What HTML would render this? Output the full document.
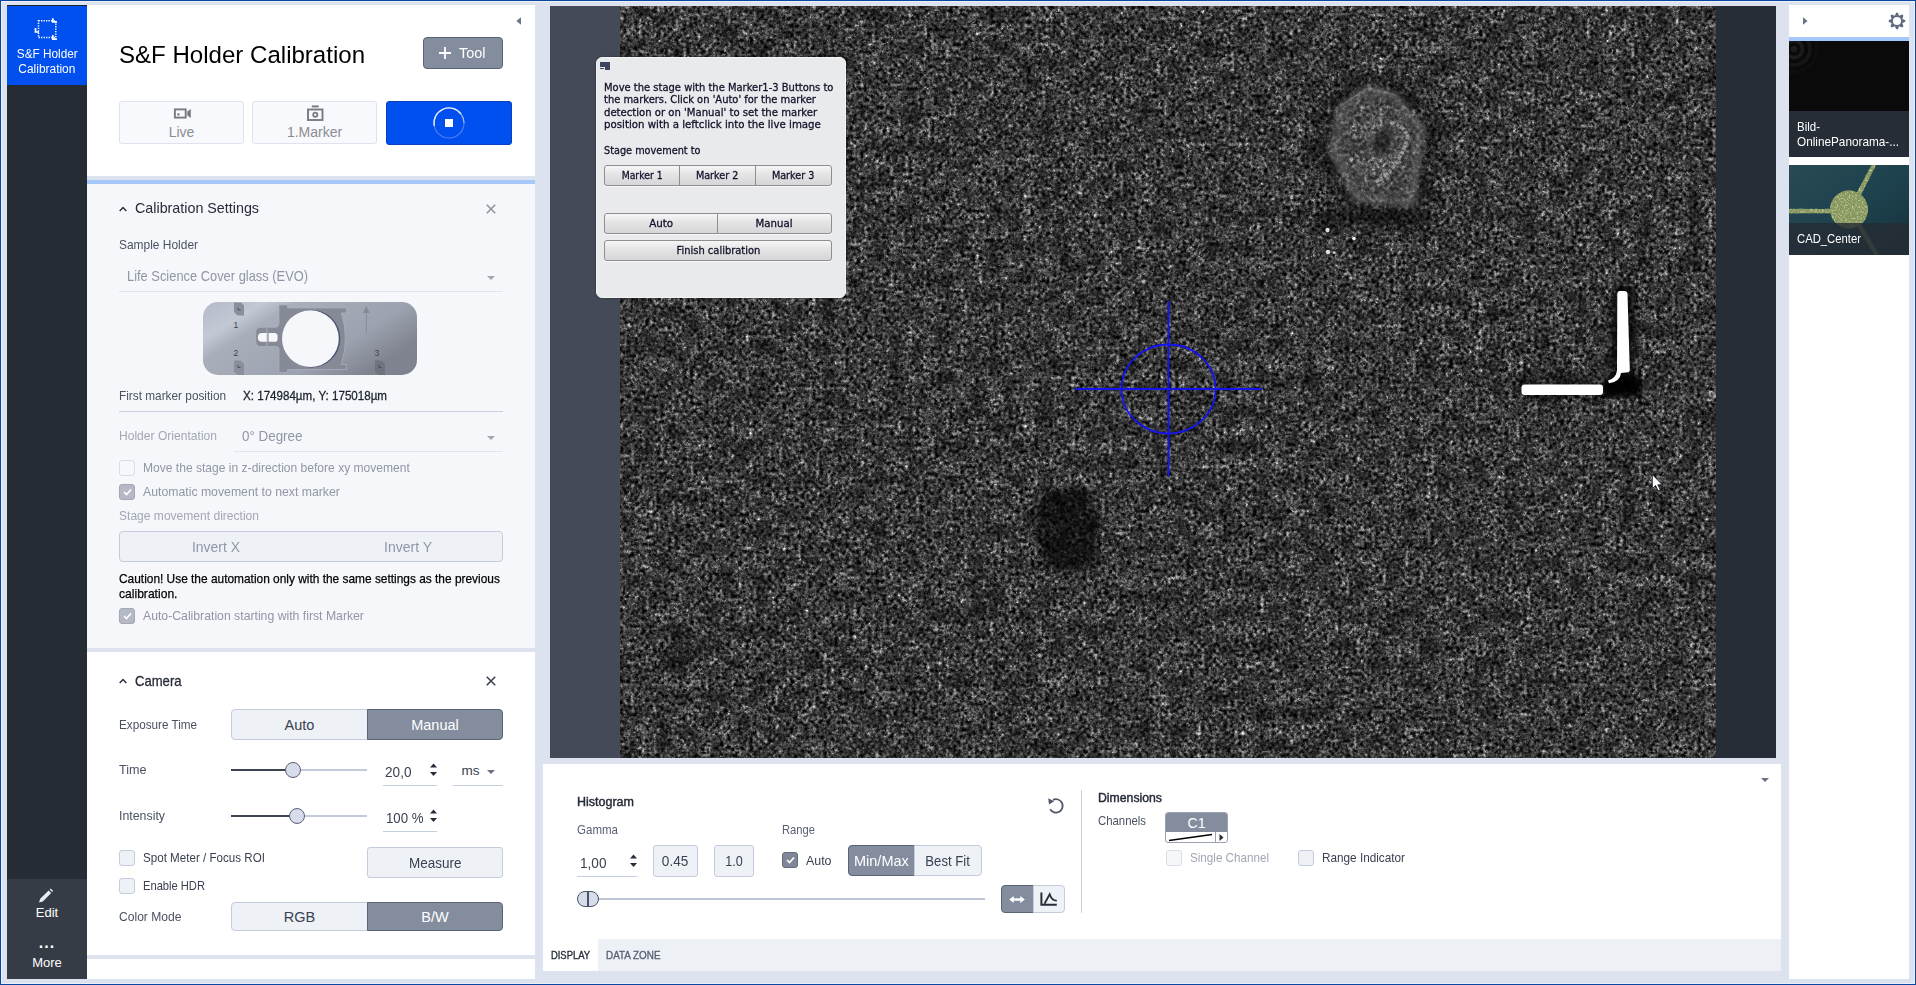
<!DOCTYPE html>
<html><head><meta charset="utf-8"><title>S&amp;F Holder Calibration</title>
<style>
*{box-sizing:border-box;margin:0;padding:0}
html,body{width:1916px;height:985px;overflow:hidden}
body{background:#dde3ee;font-family:"Liberation Sans",sans-serif;font-size:13px;color:#2a3140;position:relative}
.abs{position:absolute}
svg{position:absolute;overflow:visible}
#frame{position:absolute;left:0;top:0;width:1916px;height:985px;border:1px solid #0848a2;pointer-events:none;z-index:50}
#frame2{position:absolute;left:1px;top:1px;width:1914px;height:983px;border:1px solid #eceff5;pointer-events:none;z-index:49}
.t{position:absolute;white-space:nowrap;line-height:1}
/* sidebar */
#side{left:7px;top:5px;width:80px;height:974px;background:#262c34}
#side .act{left:0;top:0;width:80px;height:80px;background:#0050f0;border-top:1px solid #1b2330;color:#fff}
#side .bot{left:0;top:874px;width:80px;height:100px;background:#353c45;color:#fff}
.ctr{position:absolute;left:0;width:100%;text-align:center;white-space:nowrap;line-height:1}
/* left panel */
#lp{left:87px;top:5px;width:448px;height:974px;background:#fff;overflow:hidden}
.btn{position:absolute;border:1px solid #bcc6dc;background:#eef2f7;border-radius:3px}
.btn.dk{background:#838d9e;border-color:#5a6378;color:#fff}
.btn .ctr{top:50%;transform:translateY(-50%)}
.cb{position:absolute;width:16px;height:16px;border:1px solid #c3cbdc;background:#eef2f7;border-radius:3px}
.cb.dis{border-color:#d8dde8;background:#f5f7fb}
.cb.on{background:#b5b9c6;border-color:#a3a8b6}
.cb.on2{background:#7f8798;border-color:#626a7b}
.ul{position:absolute;height:1px;background:#c5cde0}
.g{color:#9096a5}
.lbl{color:#4a5262}
.qb{position:absolute;border:1px solid #8e8e90;background:linear-gradient(#f6f6f6,#e4e4e5 45%,#d6d6d8);text-align:center;font-size:10.500px;line-height:19px;white-space:nowrap;box-shadow:0 1px 0 #f8f8f8}
.qb span,.ctr span{display:inline-block}
</style></head><body>
<div id="frame"></div><div id="frame2"></div>
<!-- SIDEBAR -->
<div id="side" class="abs">
 <div class="act abs">
  <svg style="left:0;top:0" width="80" height="80" viewBox="0 0 80 80" fill="none" stroke="#fff">
   <path d="M31.500 14.800H48.800V31.600H31.500Z" stroke-width="1.500" stroke-dasharray="1.300 1.200"></path>
   <path d="M45.800 12.300V15.800H49.900M28.500 21.900V26H32M45.800 29V33.100H49.900" stroke-width="1.700"></path>
  </svg>
  <div class="ctr" style="top:42px;font-size:12.500px"><span style="transform: scaleX(0.944); transform-origin: 50% 50%;">S&amp;F Holder</span></div>
  <div class="ctr" style="top:57px;font-size:12.500px"><span style="transform: scaleX(0.954); transform-origin: 50% 50%;">Calibration</span></div>
 </div>
 <div class="bot abs">
  <svg style="left:30px;top:8px" width="18" height="18" viewBox="0 0 18 18"><path d="M2 15.5L3.2 11.8L11.6 3.4L14.2 6L5.8 14.4Z M12.6 2.4L13.6 1.4L16.2 4L15.2 5Z" fill="#e8ebf0"></path></svg>
  <div class="ctr" style="top:27px;font-size:13px">Edit</div>
  <div class="ctr" style="top:56px;font-size:16px;letter-spacing:1px;font-weight:bold">...</div>
  <div class="ctr" style="top:77px;font-size:13px">More</div>
 </div>
</div>
<!-- LEFT PANEL -->
<div id="lp" class="abs">
 <!-- header -->
 <svg style="left:429px;top:12px" width="6" height="8" viewBox="0 0 6 8"><path d="M5 0.300V7.700L0.400 4Z" fill="#67738a"></path></svg>
 <div class="t" style="left: 32px; top: 38px; font-size: 24.5px; color: rgb(0, 0, 0); transform: scaleX(0.982); transform-origin: 0px 50%;">S&amp;F Holder Calibration</div>
 <div class="btn dk" style="left:336px;top:32px;width:80px;height:32px;border-radius:4px">
   <svg style="left:15px;top:9px" width="12" height="12" viewBox="0 0 12 12"><path d="M6 0V12M0 6H12" stroke="#fff" stroke-width="1.800"></path></svg>
   <div class="t" style="left: 35px; top: 7.8px; font-size: 14.5px; color: rgb(255, 255, 255); transform: scaleX(0.996); transform-origin: 0px 50%;">Tool</div>
 </div>
 <div class="btn" style="left:32px;top:96px;width:125px;height:43px;background:#f7f9fc;border-color:#dde3ee">
   <svg style="left:54px;top:6px" width="18" height="12" viewBox="0 0 18 12" fill="none" stroke="#777a80"><rect x="0.900" y="1.400" width="10.800" height="8.200" stroke-width="1.900"></rect><path d="M13.300 3.500L16.800 1V10L13.300 7.500Z" fill="#777a80" stroke="none"></path><path d="M3.200 6.400H5.600" stroke-width="2"></path></svg>
   <div class="ctr" style="top:23.300px;transform:none;font-size:14px;color:#8b8c92">Live</div>
 </div>
 <div class="btn" style="left:165px;top:96px;width:125px;height:43px;background:#f7f9fc;border-color:#dde3ee">
   <svg style="left:54px;top:2.500px" width="17" height="16" viewBox="0 0 17 16" fill="none" stroke="#777a80"><rect x="1" y="4.500" width="14.500" height="10.500" stroke-width="1.900"></rect><path d="M4.800 1.400H11.700" stroke-width="2"></path><circle cx="8.300" cy="9.700" r="2.100" stroke-width="1.800"></circle></svg>
   <div class="ctr" style="top:23.300px;transform:none;font-size:14px;color:#8b8c92">1.Marker</div>
 </div>
 <div class="abs" style="left:299px;top:96px;width:126px;height:44px;background:#0050f0;border:1px solid #0a3fc0;border-radius:3px">
   <svg style="left:46px;top:5px" width="32" height="32" viewBox="0 0 32 32"><circle cx="16" cy="16" r="15" fill="none" stroke="#4f7ef6" stroke-width="1.200"></circle><path d="M1.300 19A15 15 0 0 1 28 7" fill="none" stroke="#e8eeff" stroke-width="1.300"></path><path d="M28 7A15 15 0 0 1 31 16" fill="none" stroke="#9db8fa" stroke-width="1.200"></path><rect x="12" y="12" width="8" height="8" fill="#fff"></rect></svg>
 </div>
 <div class="abs" style="left:0;top:171px;width:448px;height:4px;background:#dde3ee"></div>
 <div class="abs" style="left:0;top:175px;width:448px;height:4px;background:#a5c8fb"></div>
 <!-- calibration section -->
 <div class="abs" style="left:0;top:179px;width:448px;height:464px;background:#f5f7fb"></div>
 <div class="abs" style="left:0;top:643px;width:448px;height:4px;background:#dde3ee"></div>
 <svg style="left:32px;top:201px" width="8" height="6" viewBox="0 0 8 6"><path d="M0.7 5L4 1.5L7.3 5" fill="none" stroke="#2a3140" stroke-width="1.5"></path></svg>
 <div class="t" style="left: 48px; top: 196px; font-size: 14.5px; color: rgb(38, 44, 56); transform: scaleX(0.986); transform-origin: 0px 50%;">Calibration Settings</div>
 <svg style="left:399px;top:199px" width="10" height="10" viewBox="0 0 10 10"><path d="M0.8 0.8L9.2 9.2M9.2 0.8L0.8 9.2" stroke="#8a909e" stroke-width="1.5"></path></svg>
 <div class="t lbl" style="left: 32px; top: 233px; font-size: 13px; transform: scaleX(0.919); transform-origin: 0px 50%;">Sample Holder</div>
 <div class="t g" style="left: 40px; top: 264px; font-size: 14.5px; transform: scaleX(0.888); transform-origin: 0px 50%;">Life Science Cover glass (EVO)</div>
 <svg style="left:400px;top:271px" width="8" height="4" viewBox="0 0 8 4"><path d="M0 0H8L4 4Z" fill="#a0a6b4"></path></svg>
 <div class="ul" style="left:32px;top:286px;width:384px;background:#dfe4ee"></div>
 <!-- holder graphic -->
 <svg style="left:116px;top:297px" width="214" height="73" viewBox="0 0 214 73">
  <defs>
   <linearGradient id="hg" x1="0" y1="0" x2="1" y2="0.55">
    <stop offset="0" stop-color="#b4bac8"></stop><stop offset="0.22" stop-color="#c2c8d4"></stop><stop offset="0.34" stop-color="#a9aebb"></stop><stop offset="0.75" stop-color="#9da2b0"></stop><stop offset="1" stop-color="#7f838f"></stop>
   </linearGradient>
   <clipPath id="hc"><rect x="0" y="0" width="214" height="73" rx="15" ry="15"></rect></clipPath>
  </defs>
  <rect x="0" y="0" width="214" height="73" rx="15" ry="15" fill="url(#hg)"></rect>
  <g clip-path="url(#hc)">
   <path d="M31 0.5H38L41 3.5V13.5H34.5L31 10Z" fill="#8b8f9c"></path>
   <path d="M31 58.5H37.5L41 62V73H34.5L31 69.5Z" fill="#8b8f9c"></path>
   <path d="M172 58.5H178.5L182 62V73H175.5L172 69.5Z" fill="#6f737e"></path>
   <path d="M35 5.5V8H37.5M35 63V65.5H37.5M176 63V65.5H178.500" stroke="#3c4050" stroke-width="0.8" fill="none"></path>
  </g>
  <!-- frame -->
  <path d="M76 3H84.500V6H143.500V11H138.300A85 85 0 0 1 138.300 62.500H143.500V67.500H84.500V70.500H76V46.500Q76 44.500 72 44.500H58Q52.800 44.500 52.800 39.500V30Q52.800 25.300 58 25.300H72Q76 25.300 76 21Z" fill="#868a97" stroke="#aeb3c0" stroke-width="0.700"></path>
  <circle cx="108.500" cy="36.700" r="28.800" fill="#4a5070"></circle>
  <circle cx="107.400" cy="36.700" r="28.400" fill="#f5f7fb"></circle>
  <path d="M59 31H71.500Q74.500 31 74.500 33.500V37.500Q74.500 39.800 71.500 39.800H59Q54.800 39.800 54.800 35.400Q54.800 31 59 31Z" fill="#f5f7fb"></path>
  <rect x="64.300" y="25.500" width="1.300" height="19" fill="#868a97"></rect>
  <rect x="63.600" y="25.500" width="0.700" height="19" fill="#b7bcc8"></rect>
  <!-- arrow -->
  <path d="M163.300 4L166.500 11H160.100Z" fill="#868a97"></path>
  <path d="M163.300 10V30.500" stroke="#868a97" stroke-width="1"></path>
  <text x="30.500" y="25.800" font-family="Liberation Sans, sans-serif" font-size="8.500" fill="#3c4050">1</text>
  <text x="30.500" y="53.500" font-family="Liberation Sans, sans-serif" font-size="8.500" fill="#3c4050">2</text>
  <text x="171.500" y="53.500" font-family="Liberation Sans, sans-serif" font-size="8.500" fill="#3c4050">3</text>
 </svg>
 <div class="t lbl" style="left: 32px; top: 384px; font-size: 13px; transform: scaleX(0.909); transform-origin: 0px 50%;">First marker position</div>
 <div class="t" style="left: 156px; top: 384px; font-size: 13px; color: rgb(28, 34, 46); -webkit-text-stroke: 0.3px rgb(28, 34, 46); transform: scaleX(0.892); transform-origin: 0px 50%;">X: 174984µm, Y: 175018µm</div>
 <div class="ul" style="left:32px;top:406px;width:384px;background:#c9d0df"></div>
 <div class="t g" style="left: 32px; top: 424px; font-size: 13px; color: rgb(162, 167, 180); transform: scaleX(0.929); transform-origin: 0px 50%;">Holder Orientation</div>
 <div class="t g" style="left: 155px; top: 424px; font-size: 14.5px; transform: scaleX(0.924); transform-origin: 0px 50%;">0° Degree</div>
 <svg style="left:400px;top:431px" width="8" height="4" viewBox="0 0 8 4"><path d="M0 0H8L4 4Z" fill="#a0a6b4"></path></svg>
 <div class="ul" style="left:147px;top:446px;width:269px;background:#dfe4ee"></div>
 <div class="cb dis" style="left:32px;top:455px"></div>
 <div class="t g" style="left: 56px; top: 456px; font-size: 13px; transform: scaleX(0.928); transform-origin: 0px 50%;">Move the stage in z-direction before xy movement</div>
 <div class="cb on" style="left:32px;top:479px"><svg style="left:3px;top:3px" width="9" height="8" viewBox="0 0 9 8"><path d="M1 4L3.500 6.500L8 1.500" fill="none" stroke="#fff" stroke-width="1.700"></path></svg></div>
 <div class="t g" style="left: 56px; top: 480px; font-size: 13px; transform: scaleX(0.943); transform-origin: 0px 50%;">Automatic movement to next marker</div>
 <div class="t g" style="left: 32px; top: 504px; font-size: 13px; color: rgb(162, 167, 180); transform: scaleX(0.927); transform-origin: 0px 50%;">Stage movement direction</div>
 <div class="btn" style="left:32px;top:526px;width:384px;height:31px;border-radius:4px;border-color:#c3cbdc">
   <div class="t g" style="left: 71.5px; top: 8px; font-size: 14.5px; transform: scaleX(0.961); transform-origin: 0px 50%;">Invert X</div>
   <div class="t g" style="left: 263.5px; top: 8px; font-size: 14.5px; transform: scaleX(0.966); transform-origin: 0px 50%;">Invert Y</div>
 </div>
 <div class="t" style="left: 32px; top: 567px; font-size: 13px; color: rgb(0, 0, 0); -webkit-text-stroke: 0.25px rgb(0, 0, 0); transform: scaleX(0.915); transform-origin: 0px 50%;">Caution! Use the automation only with the same settings as the previous</div>
 <div class="t" style="left: 32px; top: 582px; font-size: 13px; color: rgb(0, 0, 0); -webkit-text-stroke: 0.25px rgb(0, 0, 0); transform: scaleX(0.93); transform-origin: 0px 50%;">calibration.</div>
 <div class="cb on" style="left:32px;top:603px"><svg style="left:3px;top:3px" width="9" height="8" viewBox="0 0 9 8"><path d="M1 4L3.500 6.500L8 1.500" fill="none" stroke="#fff" stroke-width="1.700"></path></svg></div>
 <div class="t g" style="left: 56px; top: 604px; font-size: 13px; transform: scaleX(0.941); transform-origin: 0px 50%;">Auto-Calibration starting with first Marker</div>
 <!-- camera section -->
 <svg style="left:32px;top:673px" width="8" height="6" viewBox="0 0 8 6"><path d="M0.700 5L4 1.500L7.300 5" fill="none" stroke="#2a3140" stroke-width="1.500"></path></svg>
 <div class="t" style="left: 48px; top: 669px; font-size: 14.5px; color: rgb(38, 44, 56); -webkit-text-stroke: 0.3px rgb(38, 44, 56); transform: scaleX(0.902); transform-origin: 0px 50%;">Camera</div>
 <svg style="left:399px;top:671px" width="10" height="10" viewBox="0 0 10 10"><path d="M0.800 0.800L9.200 9.200M9.200 0.800L0.800 9.200" stroke="#3a4150" stroke-width="1.600"></path></svg>
 <div class="t lbl" style="left: 32px; top: 713px; font-size: 13px; transform: scaleX(0.9); transform-origin: 0px 50%;">Exposure Time</div>
 <div class="btn" style="left:144px;top:704px;width:137px;height:31px;border-radius:4px 0 0 4px;border-color:#c3cbdc"><div class="ctr" style="font-size:14.500px;color:#3a4150">Auto</div></div>
 <div class="btn dk" style="left:280px;top:704px;width:136px;height:31px;border-radius:0 4px 4px 0"><div class="ctr" style="font-size:14.500px">Manual</div></div>
 <div class="t lbl" style="left: 32px; top: 758px; font-size: 13px; transform: scaleX(0.968); transform-origin: 0px 50%;">Time</div>
 <div class="abs" style="left:144px;top:764px;width:136px;height:2px;background:#c3cbdb"></div>
 <div class="abs" style="left:144px;top:764px;width:56px;height:2px;background:#3d4554"></div>
 <div class="abs" style="left:198px;top:757px;width:16px;height:16px;border-radius:8px;background:#d6dcea;border:1.500px solid #596173"></div>
 <div class="t" style="left: 298px; top: 760px; font-size: 14px; color: rgb(58, 65, 80); transform: scaleX(0.972); transform-origin: 0px 50%;">20,0</div>
 <svg style="left:343px;top:758px" width="7" height="14" viewBox="0 0 7 14"><path d="M0 4.500H7L3.500 0.500ZM0 9H7L3.500 13Z" fill="#262c38"></path></svg>
 <div class="ul" style="left:296px;top:780px;width:54px"></div>
 <div class="t" style="left:374.500px;top:758.500px;font-size:13.500px;color:#3a4150">ms</div>
 <svg style="left:400px;top:765px" width="8" height="4" viewBox="0 0 8 4"><path d="M0 0H8L4 4Z" fill="#6a7282"></path></svg>
 <div class="ul" style="left:366px;top:780px;width:50px"></div>
 <div class="t lbl" style="left: 32px; top: 804px; font-size: 13px; transform: scaleX(0.95); transform-origin: 0px 50%;">Intensity</div>
 <div class="abs" style="left:144px;top:810px;width:136px;height:2px;background:#c3cbdb"></div>
 <div class="abs" style="left:144px;top:810px;width:60px;height:2px;background:#3d4554"></div>
 <div class="abs" style="left:202px;top:803px;width:16px;height:16px;border-radius:8px;background:#d6dcea;border:1.500px solid #596173"></div>
 <div class="t" style="left: 299px; top: 806px; font-size: 14px; color: rgb(58, 65, 80); transform: scaleX(0.945); transform-origin: 0px 50%;">100 %</div>
 <svg style="left:343px;top:804px" width="7" height="14" viewBox="0 0 7 14"><path d="M0 4.500H7L3.500 0.500ZM0 9H7L3.500 13Z" fill="#262c38"></path></svg>
 <div class="ul" style="left:296px;top:826px;width:54px"></div>
 <div class="cb" style="left:32px;top:845px"></div>
 <div class="t" style="left: 56px; top: 846px; font-size: 13px; color: rgb(58, 65, 80); transform: scaleX(0.893); transform-origin: 0px 50%;">Spot Meter / Focus ROI</div>
 <div class="btn" style="left:280px;top:842px;width:136px;height:31px;border-radius:3px;border-color:#c3cbdc"><div class="ctr" style="font-size:14.500px;color:#3a4150"><span style="transform: scaleX(0.93); transform-origin: 50% 50%;">Measure</span></div></div>
 <div class="cb" style="left:32px;top:873px"></div>
 <div class="t" style="left: 56px; top: 874px; font-size: 13px; color: rgb(58, 65, 80); letter-spacing: -0.02px; transform: scaleX(0.86); transform-origin: 0px 50%;">Enable HDR</div>
 <div class="t lbl" style="left: 32px; top: 905px; font-size: 13px; transform: scaleX(0.93); transform-origin: 0px 50%;">Color Mode</div>
 <div class="btn" style="left:144px;top:897px;width:137px;height:29px;border-radius:4px 0 0 4px;border-color:#c3cbdc"><div class="ctr" style="font-size:14.500px;color:#3a4150">RGB</div></div>
 <div class="btn dk" style="left:280px;top:897px;width:136px;height:29px;border-radius:0 4px 4px 0"><div class="ctr" style="font-size:14.500px">B/W</div></div>
 <div class="abs" style="left:0;top:950px;width:448px;height:4px;background:#dde3ee"></div>
</div>
<!-- VIEWER -->
<div id="vw" class="abs" style="left:550px;top:6px;width:1226px;height:752px;background:#272d36;overflow:hidden">
 <div class="abs" style="left:0;top:0;width:70px;height:752px;background:#444a57"></div>
 <svg style="left:69.500px;top:0" width="1095.500" height="752" viewBox="0 0 1095.500 752">
  <defs>
   <filter id="nz" x="0" y="0" width="100%" height="100%" color-interpolation-filters="sRGB">
    <feTurbulence type="fractalNoise" baseFrequency="0.27" numOctaves="3" seed="7" result="t"></feTurbulence>
    <feColorMatrix in="t" type="matrix" values="0.75 0.75 0 0 -0.385  0.75 0.75 0 0 -0.385  0.75 0.75 0 0 -0.385  0 0 0 0 1" result="f0"></feColorMatrix>
    <feComponentTransfer in="f0" result="f"><feFuncR type="gamma" exponent="1.5" amplitude="1.0"></feFuncR><feFuncG type="gamma" exponent="1.5" amplitude="1.0"></feFuncG><feFuncB type="gamma" exponent="1.5" amplitude="1.0"></feFuncB></feComponentTransfer>
    <feColorMatrix in="t" type="matrix" values="0 0 6 0 -3.960  0 0 6 0 -3.960  0 0 6 0 -3.960  0 0 0 0 1" result="s"></feColorMatrix>
    <feComposite in="f" in2="s" operator="arithmetic" k1="0" k2="1" k3="0.3" k4="0" result="g"></feComposite>
    <feTurbulence type="fractalNoise" baseFrequency="0.06" numOctaves="2" seed="11" result="lt"></feTurbulence>
    <feColorMatrix in="lt" type="matrix" values="1 0 0 0 0  1 0 0 0 0  1 0 0 0 0  0 0 0 0 1" result="l"></feColorMatrix>
    <feComposite in="g" in2="l" operator="arithmetic" k1="1.3" k2="0.30" k3="0" k4="0"></feComposite><feGaussianBlur stdDeviation="0.75"></feGaussianBlur>
   </filter>
   <filter id="b6"><feGaussianBlur stdDeviation="6"></feGaussianBlur></filter>
   <filter id="b3"><feGaussianBlur stdDeviation="3"></feGaussianBlur></filter>
   <filter id="b1"><feGaussianBlur stdDeviation="0.700"></feGaussianBlur></filter>
  </defs>
  <rect width="1095.500" height="752" fill="#fff" filter="url(#nz)"></rect>
  <!-- dark / bright modulation over noise -->
  <g filter="url(#b6)">
   <path d="M747.600 79.700L776.500 87.500L805.700 121L794.500 201.400L734.200 197L708.500 143.300L718.500 98.700Z" fill="none" stroke="#000" stroke-width="26" opacity="0.420"></path>
   <rect x="690" y="207" width="112" height="17" fill="#000" opacity="0.450"></rect>
   <ellipse cx="60" cy="647" rx="20" ry="18" fill="#000" opacity="0.330"></ellipse>
   <ellipse cx="372" cy="597" rx="14" ry="9" fill="#000" opacity="0.200"></ellipse>
  </g>
  <g filter="url(#b3)">
   <path d="M430 482L462 483L479 510L478 546L456 566L428 563L415 530L418 498Z" fill="#000" opacity="0.620"></path>
   <path d="M747.600 79.700L776.500 87.500L805.700 121L794.500 201.400L734.200 197L708.500 143.300L718.500 98.700Z" fill="#fff" opacity="0.130"></path>
   <path d="M747.600 82.700L775.500 90.500L801.700 122L791.500 197.400L737.200 193L712.500 143.300L721.500 100.700Z" fill="none" stroke="#fff" stroke-width="7" opacity="0.200"></path>
   <ellipse cx="762" cy="135" rx="11" ry="18" fill="#000" opacity="0.520" transform="rotate(18 762 135)"></ellipse>
  </g>
  <g filter="url(#b1)" fill="none" stroke="#fff">
   <path d="M770 116Q784 120 788 130Q780 162 756 176" stroke-width="3.500" opacity="0.380" stroke-dasharray="5 2 3 1"></path>
   <path d="M720 100L748 82L776 89" stroke-width="2" opacity="0.150"></path>
   <g fill="#fff" stroke="none"><circle cx="707.500" cy="224" r="2.200" opacity="0.850"></circle><circle cx="734" cy="232.500" r="1.800" opacity="0.950"></circle><circle cx="708" cy="246" r="2.200" opacity="0.850"></circle><circle cx="714" cy="246.500" r="1.600" opacity="0.700"></circle><circle cx="711" cy="236" r="3" opacity="0.250"></circle></g>
  </g>
  <g filter="url(#b3)" fill="none" stroke="#000" stroke-linecap="round">
   <path d="M1003 290V370" stroke-width="26" opacity="0.700"></path>
   <path d="M905 383.500H985" stroke-width="20" opacity="0.400"></path>
   <path d="M905 372H960" stroke-width="14" opacity="0.350"></path>
   <path d="M992 381H1012" stroke-width="22" opacity="0.950"></path>
  </g>
  <g filter="url(#b1)" fill="#fff">
   <rect x="901.500" y="378.400" width="81.500" height="10.600" rx="3"></rect>
   <path d="M1000 285H1004.500Q1007.300 285 1007.500 288L1009.800 364Q1009.800 366.500 1006 366.500L1001 367Q1000 376 989 377.200L988 374.500Q996.500 372 997 364L997.300 288Q997.500 285 1000 285Z"></path>
  </g>
  <!-- crosshair -->
  <g stroke="#1414ee" stroke-width="1.800" fill="none">
   <path d="M455 383H642M548.500 295V470.500"></path>
   <ellipse cx="548.500" cy="383" rx="47" ry="44.500"></ellipse>
  </g>
  <!-- cursor -->
  <path d="M1032.300 468.500V482.500L1035.600 479.600L1038.200 484.800L1040.300 483.800L1037.800 478.800H1042.300Z" fill="#fff" stroke="#0a0a14" stroke-width="0.800"></path>
 </svg>
 <!-- dialog -->
 <div class="abs" id="dlg" style="left:46px;top:51px;width:250px;height:241px;background:#e9eaec;border:1px solid #f4f4f6;border-radius:6px;box-shadow:0 0 2px rgba(0,0,0,.5);font-family:'DejaVu Sans','Liberation Sans',sans-serif;color:#10122a;-webkit-text-stroke:0.300px #10122a">
  <div class="abs" style="left:3px;top:4px;width:10px;height:7.500px;background:#3c4460"></div>
  <div class="abs" style="left:3px;top:8.500px;width:5px;height:3px;background:#e9eaec"></div><div class="abs" style="left:3px;top:10.300px;width:4px;height:1.200px;background:#3c4460"></div>
  <div class="t" style="left: 7px; top: 24px; font-size: 10.5px; transform: scaleX(0.948); transform-origin: 0px 50%;">Move the stage with the Marker1-3 Buttons to</div>
  <div class="t" style="left: 7px; top: 36.3px; font-size: 10.5px; transform: scaleX(0.945); transform-origin: 0px 50%;">the markers. Click on 'Auto' for the marker</div>
  <div class="t" style="left: 7px; top: 48.7px; font-size: 10.5px; transform: scaleX(0.96); transform-origin: 0px 50%;">detection or on 'Manual' to set the marker</div>
  <div class="t" style="left: 7px; top: 61px; font-size: 10.5px; transform: scaleX(0.974); transform-origin: 0px 50%;">position with a leftclick into the live image</div>
  <div class="t" style="left: 7px; top: 87px; font-size: 10.5px; transform: scaleX(0.925); transform-origin: 0px 50%;">Stage movement to</div>
  <div class="qb" style="left:7px;top:106.5px;width:76px;height:21px;border-radius:3px 0 0 3px"><span style="transform: scaleX(0.885); transform-origin: 50% 50%;">Marker 1</span></div>
  <div class="qb" style="left:82px;top:106.5px;width:77px;height:21px;border-radius:0"><span style="transform: scaleX(0.918); transform-origin: 50% 50%;">Marker 2</span></div>
  <div class="qb" style="left:158px;top:106.5px;width:77px;height:21px;border-radius:0 3px 3px 0"><span style="transform: scaleX(0.918); transform-origin: 50% 50%;">Marker 3</span></div>
  <div class="qb" style="left:7px;top:154.5px;width:114px;height:21px;border-radius:3px 0 0 3px"><span style="transform: scaleX(0.984); transform-origin: 50% 50%;">Auto</span></div>
  <div class="qb" style="left:120px;top:154.5px;width:115px;height:21px;border-radius:0 3px 3px 0"><span style="transform: scaleX(0.97); transform-origin: 50% 50%;">Manual</span></div>
  <div class="qb" style="left:7px;top:181.500px;width:228px;height:21px;border-radius:3px"><span style="transform: scaleX(0.946); transform-origin: 50% 50%;">Finish calibration</span></div>
 </div>
</div>
<!-- BOTTOM PANEL -->
<div id="bp" class="abs" style="left:543px;top:764px;width:1238px;height:207px;background:#fff">
 <div class="abs" style="left:0;top:175px;width:1238px;height:32px;background:#edf1f6"></div>
 <div class="abs" style="left:0;top:175px;width:55px;height:32px;background:#fff"></div>
 <div class="t" style="left: 8px; top: 186px; font-size: 11px; color: rgb(38, 44, 56); -webkit-text-stroke: 0.35px rgb(38, 44, 56); letter-spacing: -0.05px; transform: scaleX(0.86); transform-origin: 0px 50%;">DISPLAY</div>
 <div class="t" style="left: 63px; top: 186px; font-size: 11px; color: rgb(89, 97, 115); -webkit-text-stroke: 0.35px rgb(89, 97, 115); transform: scaleX(0.898); transform-origin: 0px 50%;">DATA ZONE</div>
 <svg style="left:1218px;top:14px" width="8" height="4" viewBox="0 0 8 4"><path d="M0 0H8L4 4Z" fill="#6a7282"></path></svg>
 <div class="t" style="left: 34px; top: 31px; font-size: 13px; color: rgb(38, 44, 56); -webkit-text-stroke: 0.45px rgb(38, 44, 56); transform: scaleX(0.962); transform-origin: 0px 50%;">Histogram</div>
 <svg style="left:504px;top:33px" width="18" height="18" viewBox="0 0 18 18"><path d="M6 2.900A6.700 6.700 0 1 1 3.200 12.250" fill="none" stroke="#4f5868" stroke-width="1.800"></path><path d="M1.200 1.200L7.200 4.300L2 7.400Z" fill="#4f5868"></path></svg>
 <div class="t" style="left: 34px; top: 59.3px; font-size: 13px; color: rgb(89, 97, 115); transform: scaleX(0.887); transform-origin: 0px 50%;">Gamma</div>
 <div class="t" style="left: 239px; top: 59.3px; font-size: 13px; color: rgb(89, 97, 115); transform: scaleX(0.861); transform-origin: 0px 50%;">Range</div>
 <div class="t" style="left: 36.5px; top: 92px; font-size: 14px; color: rgb(58, 65, 80); transform: scaleX(0.972); transform-origin: 0px 50%;">1,00</div>
 <svg style="left:87px;top:90px" width="7" height="14" viewBox="0 0 7 14"><path d="M0 4.500H7L3.500 0.500ZM0 9H7L3.500 13Z" fill="#262c38"></path></svg>
 <div class="ul" style="left:34px;top:112px;width:60px"></div>
 <div class="btn" style="left:110px;top:81px;width:45px;height:32px;border-color:#c3cbdc"><div class="ctr" style="font-size:14.500px;color:#3a4150"><span style="transform: scaleX(0.939); transform-origin: 50% 50%;">0.45</span></div></div>
 <div class="btn" style="left:171px;top:81px;width:40px;height:32px;border-color:#c3cbdc"><div class="ctr" style="font-size:14.500px;color:#3a4150"><span style="transform: scaleX(0.868); transform-origin: 50% 50%;">1.0</span></div></div>
 <div class="cb on2" style="left:239px;top:88px"><svg style="left:3px;top:3px" width="9" height="8" viewBox="0 0 9 8"><path d="M1 4L3.500 6.500L8 1.500" fill="none" stroke="#fff" stroke-width="1.700"></path></svg></div>
 <div class="t" style="left: 263px; top: 90px; font-size: 13px; color: rgb(58, 65, 80); transform: scaleX(0.953); transform-origin: 0px 50%;">Auto</div>
 <div class="btn dk" style="left:305px;top:81px;width:67px;height:31px;border-radius:4px 0 0 4px"><div class="ctr" style="font-size:14.500px"><span style="transform: scaleX(0.998); transform-origin: 50% 50%;">Min/Max</span></div></div>
 <div class="btn" style="left:371px;top:81px;width:68px;height:31px;border-radius:0 4px 4px 0;border-color:#c3cbdc"><div class="ctr" style="font-size:14.500px;color:#3a4150"><span style="transform: scaleX(0.905); transform-origin: 50% 50%;">Best Fit</span></div></div>
 <div class="abs" style="left:55px;top:134px;width:387px;height:2px;background:#bcc5d6"></div>
 <div class="abs" style="left:34px;top:127px;width:22px;height:16px;border-radius:8px;background:#d6dcea;border:1.500px solid #4a5263"></div>
 <div class="abs" style="left:44.300px;top:127px;width:1.400px;height:16px;background:#4a5263"></div>
 <div class="btn dk" style="left:458px;top:121px;width:33px;height:28px;border-radius:4px 0 0 4px">
   <svg style="left:7.200px;top:9.500px" width="16" height="7" viewBox="0 0 15.600 7"><path d="M0 3.500L4.500 0V2.300H11.100V0L15.600 3.500L11.100 7V4.700H4.500V7Z" fill="#fff"></path></svg></div>
 <div class="btn" style="left:490px;top:121px;width:32px;height:28px;border-radius:0 4px 4px 0;border-color:#c3cbdc">
   <svg style="left:0;top:0" width="32" height="28" viewBox="0 0 32 28" fill="none" stroke="#262c38"><path d="M7.400 6.500V18.700H22.800" stroke-width="2"></path><path d="M10.500 17.800L15.700 8.300Q18 15 22.800 14.700" stroke-width="1.800"></path></svg></div>
 <div class="abs" style="left:538px;top:26px;width:1px;height:123px;background:#c9d0df"></div>
 <div class="t" style="left: 555px; top: 27px; font-size: 13px; color: rgb(38, 44, 56); -webkit-text-stroke: 0.45px rgb(38, 44, 56); transform: scaleX(0.942); transform-origin: 0px 50%;">Dimensions</div>
 <div class="t" style="left: 555px; top: 50px; font-size: 13px; color: rgb(74, 82, 98); transform: scaleX(0.874); transform-origin: 0px 50%;">Channels</div>
 <div class="abs" style="left:622px;top:48px;width:63px;height:31px;border:1px solid #9aa2b2;border-radius:3px;background:#fff;overflow:hidden">
   <div class="abs" style="left:0;top:0;width:63px;height:19px;background:#838d9e"></div>
   <div class="ctr" style="top:3px;font-size:14px;color:#fff">C1</div>
   <div class="abs" style="left:49px;top:19px;width:1px;height:11px;background:#9aa2b2"></div>
   <svg style="left:2px;top:20px" width="46" height="9" viewBox="0 0 46 9"><path d="M1 7.500L44 1.500" stroke="#000" stroke-width="1.300"></path></svg>
   <svg style="left:53px;top:21px" width="5" height="7" viewBox="0 0 5 7"><path d="M0.500 0L4.500 3.500L0.500 7Z" fill="#262c38"></path></svg>
 </div>
 <div class="cb dis" style="left:623px;top:86px"></div>
 <div class="t g" style="left: 647px; top: 87px; font-size: 13px; color: rgb(162, 167, 180); transform: scaleX(0.896); transform-origin: 0px 50%;">Single Channel</div>
 <div class="cb" style="left:755px;top:86px"></div>
 <div class="t" style="left: 779px; top: 87px; font-size: 13px; color: rgb(58, 65, 80); transform: scaleX(0.904); transform-origin: 0px 50%;">Range Indicator</div>
</div>
<!-- RIGHT PANEL -->
<div id="rp" class="abs" style="left:1789px;top:5px;width:120px;height:974px;background:#fff;overflow:hidden">
 <svg style="left:13px;top:12px" width="6" height="8" viewBox="0 0 6 8"><path d="M1 0.300V7.700L5.600 4Z" fill="#67738a"></path></svg>
 <svg style="left:99px;top:7px" width="18" height="18" viewBox="-9 -9 18 18"><g fill="#5c687b"><path d="M-2.200 -5.200L-0.800 -8.300H0.800L2.200 -5.200Z" transform="rotate(0)"></path><path d="M-2.200 -5.200L-0.800 -8.300H0.800L2.200 -5.200Z" transform="rotate(45)"></path><path d="M-2.200 -5.200L-0.800 -8.300H0.800L2.200 -5.200Z" transform="rotate(90)"></path><path d="M-2.200 -5.200L-0.800 -8.300H0.800L2.200 -5.200Z" transform="rotate(135)"></path><path d="M-2.200 -5.200L-0.800 -8.300H0.800L2.200 -5.200Z" transform="rotate(180)"></path><path d="M-2.200 -5.200L-0.800 -8.300H0.800L2.200 -5.200Z" transform="rotate(225)"></path><path d="M-2.200 -5.200L-0.800 -8.300H0.800L2.200 -5.200Z" transform="rotate(270)"></path><path d="M-2.200 -5.200L-0.800 -8.300H0.800L2.200 -5.200Z" transform="rotate(315)"></path><circle r="5.800"></circle></g><circle r="4.100" fill="#fff"></circle></svg>
 <div class="abs" style="left:0;top:32px;width:120px;height:4px;background:#a5c8fb"></div>
 <!-- thumb 1 -->
 <div class="abs" style="left:0;top:36px;width:120px;height:116px;background:#272d36;overflow:hidden">
  <svg style="left:0;top:0" width="120" height="70" viewBox="0 0 120 70"><rect width="120" height="70" fill="#0a0a0a"></rect><g fill="none" stroke="#1c1c1c" stroke-width="3.500" filter="url(#b1)"><circle cx="5" cy="8" r="1.500" fill="#1c1c1c"></circle><circle cx="5" cy="8" r="8.500"></circle><circle cx="5" cy="8" r="16" stroke="#151515"></circle><circle cx="5" cy="8" r="23" stroke="#111"></circle></g></svg>
  <div class="t" style="left: 8px; top: 78.5px; font-size: 13px; color: rgb(255, 255, 255); transform: scaleX(0.884); transform-origin: 0px 50%;">Bild-</div>
  <div class="t" style="left: 8px; top: 94px; font-size: 13px; color: rgb(255, 255, 255); transform: scaleX(0.905); transform-origin: 0px 50%;">OnlinePanorama-...</div>
 </div>
 <!-- thumb 2 -->
 <div class="abs" style="left:0;top:160px;width:120px;height:89.500px;overflow:hidden;background:#1e4552">
  <svg style="left:0;top:0" width="120" height="90" viewBox="0 0 120 90">
   <defs><linearGradient id="tg" x1="0" y1="0" x2="1" y2="1"><stop offset="0" stop-color="#284a55"></stop><stop offset="0.550" stop-color="#1d414d"></stop><stop offset="1" stop-color="#15323c"></stop></linearGradient>
   <filter id="tn" x="0" y="0" width="100%" height="100%"><feTurbulence type="fractalNoise" baseFrequency="0.600" numOctaves="1" seed="3"></feTurbulence><feColorMatrix type="matrix" values="0 0 0 0 0.800  0 0 0 0 0.850  0 0 0 0 0.500  2.200 0 0 0 -1.050"></feColorMatrix><feComposite in2="SourceGraphic" operator="in"></feComposite></filter></defs>
   <rect width="120" height="90" fill="url(#tg)"></rect>
   <g fill="#86965e"><path d="M0 44H42V48.300H0Z"></path><path d="M67 29L82.500 0H87L71 32Z"></path><path d="M66 58L70.500 56L90 90H85.500Z" opacity="0.800"></path><circle cx="60" cy="44.500" r="19"></circle></g>
   <g filter="url(#tn)"><path d="M0 43.500H42V48.500H0Z"></path><path d="M67 29L82 0H87.500L71 32Z"></path><circle cx="60" cy="44.500" r="19"></circle></g>
  </svg>
  <div class="abs" style="left:0;top:57.500px;width:120px;height:32px;background:rgba(38,44,52,.820)"></div>
  <div class="t" style="left: 8px; top: 67px; font-size: 13px; color: rgb(255, 255, 255); transform: scaleX(0.868); transform-origin: 0px 50%;">CAD_Center</div>
 </div>
</div>

</body></html>
